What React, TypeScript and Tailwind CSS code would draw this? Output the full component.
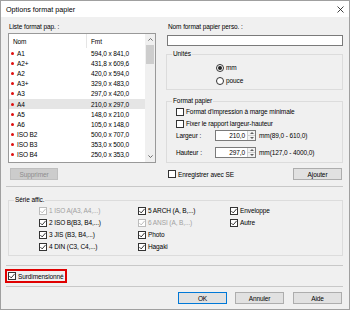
import React from 'react';

const papers = [
  { name: 'A1', fmt: '594,0 x 841,0' },
  { name: 'A2+', fmt: '431,8 x 609,6' },
  { name: 'A2', fmt: '420,0 x 594,0' },
  { name: 'A3+', fmt: '329,0 x 483,0' },
  { name: 'A3', fmt: '297,0 x 420,0' },
  { name: 'A4', fmt: '210,0 x 297,0' },
  { name: 'A5', fmt: '148,0 x 210,0' },
  { name: 'A6', fmt: '105,0 x 148,0' },
  { name: 'ISO B2', fmt: '500,0 x 707,0' },
  { name: 'ISO B3', fmt: '353,0 x 500,0' },
  { name: 'ISO B4', fmt: '250,0 x 353,0' },
];

const series = [
  { label: '1 ISO A(A3, A4,...)', disabled: true },
  { label: '5 ARCH (A, B,...)' },
  { label: 'Enveloppe' },
  { label: '2 ISO B(B3, B4,...)' },
  { label: '6 ANSI (A, B,...)', disabled: true },
  { label: 'Autre' },
  { label: '3 JIS (B3, B4,...)' },
  { label: 'Photo' },
  null,
  { label: '4 DIN (C3, C4,...)' },
  { label: 'Hagaki' },
  null,
];

function Check({ checked, disabled }: { checked?: boolean; disabled?: boolean }) {
  return (
    <span
      className={`flex h-[8px] w-[8px] shrink-0 items-center justify-center border bg-white ${
        disabled ? 'border-[#bcbcbc]' : 'border-[#333333]'
      }`}
    >
      {checked && (
        <svg width="6" height="6" viewBox="0 0 6 6">
          <path
            d="M0.4 3.1 L2.2 4.9 L5.6 0.9"
            fill="none"
            stroke={disabled ? '#b5b5b5' : '#222222'}
            strokeWidth="0.9"
          />
        </svg>
      )}
    </span>
  );
}

function Radio({ checked }: { checked?: boolean }) {
  return (
    <span className="flex h-[8px] w-[8px] shrink-0 items-center justify-center rounded-full border border-[#333333] bg-white">
      {checked && <span className="h-[4px] w-[4px] rounded-full bg-[#222222]" />}
    </span>
  );
}

function Spin() {
  return (
    <span className="flex h-full w-[8px] flex-col border-l border-[#d0d0d0] bg-[#f3f3f3]">
      <span className="flex flex-1 items-center justify-center border-b border-[#d0d0d0]">
        <svg width="4" height="2" viewBox="0 0 4 2">
          <path d="M0 2 L2 0 L4 2 Z" fill="#606060" />
        </svg>
      </span>
      <span className="flex flex-1 items-center justify-center">
        <svg width="4" height="2" viewBox="0 0 4 2">
          <path d="M0 0 L2 2 L4 0 Z" fill="#606060" />
        </svg>
      </span>
    </span>
  );
}

function NumField({ label, value, range }: { label: string; value: string; range: string }) {
  return (
    <div className="flex h-[11px] items-center">
      <span className="w-[39px]">{label}</span>
      <span className="flex h-[11px] w-[41px] items-center border border-[#7a7a7a] bg-white">
        <span className="flex-1 pr-[2px] text-right">{value}</span>
        <Spin />
      </span>
      <span className="ml-[3px]">{range}</span>
    </div>
  );
}

export default function App() {
  return (
    <div className="flex h-[310px] w-[350px] flex-col border border-[#a0a0a0] bg-[#f0f0f0] font-['Liberation_Sans',Arial,sans-serif] text-[6.5px] leading-[9px] tracking-[-0.1px] text-black">
      {/* Title bar */}
      <div className="flex h-[16px] shrink-0 items-center justify-between bg-white pl-[5px] pr-[5px]">
        <span className="text-[7.2px] tracking-normal">Options format papier</span>
        <svg width="7" height="7" viewBox="0 0 7 7">
          <path d="M0.5 0.5 L6.5 6.5 M6.5 0.5 L0.5 6.5" stroke="#111111" strokeWidth="0.8" />
        </svg>
      </div>

      {/* Top section */}
      <div className="flex">
        {/* Left column */}
        <div className="ml-[7px] flex w-[148px] flex-col">
          <div className="mt-[5px] h-[9px] pl-[1px]">Liste format pap. :</div>
          <div className="mt-[2px] flex h-[130px] border border-[#999999] bg-white">
            <div className="flex flex-1 flex-col">
              <div className="flex h-[14px] items-center">
                <span className="w-[77px] pl-[4px]">Nom</span>
                <span className="h-full w-px bg-[#e5e5e5]" />
                <span className="pl-[4px]">Fmt</span>
              </div>
              {papers.map((p) => (
                <div
                  key={p.name}
                  className={`flex h-[10.2px] items-center ${p.name === 'A4' ? 'bg-[#e5e5e5]' : ''}`}
                >
                  <span className="flex w-[82px] items-center pl-[2px]">
                    <span className="h-[3px] w-[3px] rounded-full bg-[#e01010]" />
                    <span className="ml-[3px]">{p.name}</span>
                  </span>
                  <span>{p.fmt}</span>
                </div>
              ))}
            </div>
            <div className="flex w-[10px] flex-col bg-[#f0f0f0]">
              <div className="flex h-[11px] items-center justify-center">
                <svg width="5" height="3" viewBox="0 0 5 3">
                  <path d="M0.4 2.6 L2.5 0.5 L4.6 2.6" fill="none" stroke="#606060" strokeWidth="0.9" />
                </svg>
              </div>
              <div className="mx-[1px] h-[19px] bg-[#cdcdcd]" />
              <div className="flex-1" />
              <div className="flex h-[11px] items-center justify-center">
                <svg width="5" height="3" viewBox="0 0 5 3">
                  <path d="M0.4 0.4 L2.5 2.5 L4.6 0.4" fill="none" stroke="#606060" strokeWidth="0.9" />
                </svg>
              </div>
            </div>
          </div>
          <div className="ml-[2px] mt-[5px] flex h-[12px] w-[48px] items-center justify-center border border-[#bfbfbf] bg-[#cccccc] text-[#8c8c8c]">
            Supprimer
          </div>
        </div>

        {/* Right column */}
        <div className="ml-[10px] flex w-[177px] flex-col">
          <div className="mt-[5px] h-[9px] pl-[2px]">Nom format papier perso. :</div>
          <div className="ml-[1px] mt-[4px] h-[11px] border border-[#7a7a7a] bg-white" />

          <fieldset className="mt-[4px] border border-[#dcdcdc]">
            <legend className="ml-[5px] px-[1px] leading-[8px]">Unités</legend>
            <div className="flex flex-col gap-[4px] pb-[4px] pl-[49px] pt-[5px]">
              <div className="flex h-[9px] items-center gap-[2px]">
                <Radio checked />
                <span>mm</span>
              </div>
              <div className="flex h-[9px] items-center gap-[2px]">
                <Radio />
                <span>pouce</span>
              </div>
            </div>
          </fieldset>

          <fieldset className="mt-[7px] border border-[#dcdcdc]">
            <legend className="ml-[5px] px-[1px] leading-[8px]">Format papier</legend>
            <div className="flex flex-col pb-[4px] pl-[9px] pt-[2px]">
              <div className="flex h-[9px] items-center gap-[2px]">
                <Check />
                <span>Format d'impression à marge minimale</span>
              </div>
              <div className="mt-[3px] flex h-[9px] items-center gap-[2px]">
                <Check />
                <span>Fixer le rapport largeur-hauteur</span>
              </div>
              <div className="mt-[2px]">
                <NumField label="Largeur :" value="210,0" range="mm(89,0 - 610,0)" />
              </div>
              <div className="mt-[6px]">
                <NumField label="Hauteur :" value="297,0" range="mm(127,0 - 4000,0)" />
              </div>
            </div>
          </fieldset>

          <div className="mt-[5px] flex h-[12px] items-center justify-between">
            <div className="flex items-center gap-[2px] pl-[2px]">
              <Check />
              <span>Enregistrer avec SE</span>
            </div>
            <div className="mr-[1px] flex h-[12px] w-[49px] items-center justify-center border border-[#adadad] bg-[#e1e1e1]">
              Ajouter
            </div>
          </div>
        </div>
      </div>

      <div className="ml-[5px] mt-[6px] h-px w-[337px] bg-[#c8c8c8]" />

      <fieldset className="ml-[7px] mt-[9px] w-[335px] border border-[#dcdcdc]">
        <legend className="ml-[5px] px-[1px] leading-[8px]">Série affic.</legend>
        <div className="grid grid-cols-[99px_92px_1fr] gap-y-[3px] pb-[4px] pl-[30px] pt-[2px]">
          {series.map((s, i) =>
            s ? (
              <div key={i} className="flex h-[9px] items-center gap-[2px]">
                <Check checked disabled={s.disabled} />
                <span className={s.disabled ? 'text-[#a0a0a0]' : ''}>{s.label}</span>
              </div>
            ) : (
              <div key={i} className="h-[9px]" />
            ),
          )}
        </div>
      </fieldset>

      <div className="ml-[5px] mt-[9px] h-px w-[337px] bg-[#c8c8c8]" />

      <div className="ml-[4px] mt-[3px] flex h-[14px] w-[62px] items-center gap-[2px] border-2 border-[#e00000] pl-[1px]">
        <Check checked />
        <span>Surdimensionné</span>
      </div>

      <div className="ml-[5px] mt-[3px] h-px w-[337px] bg-[#c8c8c8]" />

      <div className="mr-[7px] mt-[5px] flex h-[12px] justify-end">
        <div className="flex w-[49px] items-center justify-center border border-[#0078d7] bg-[#e1e1e1]">OK</div>
        <div className="ml-[8px] flex w-[49px] items-center justify-center border border-[#adadad] bg-[#e1e1e1]">
          Annuler
        </div>
        <div className="ml-[9px] flex w-[49px] items-center justify-center border border-[#adadad] bg-[#e1e1e1]">
          Aide
        </div>
      </div>
    </div>
  );
}
